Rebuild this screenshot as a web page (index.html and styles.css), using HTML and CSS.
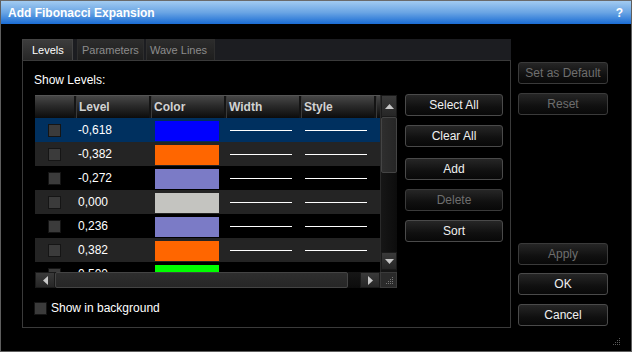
FILE: index.html
```html
<!DOCTYPE html>
<html lang="en">
<head>
    <meta charset="UTF-8">
    <title>Add Fibonacci Expansion</title>
    <link rel="stylesheet" href="styles.css">
</head>
<body>
    <div class="window">
        <div class="titlebar">
            <span class="title">Add Fibonacci Expansion</span>
            <span class="help">?</span>
        </div>

        <div class="main">
            <div class="tabbox">
                <div class="tabs">
                    <div class="tab active">Levels</div>
                    <div class="tab tab-params">Parameters</div>
                    <div class="tab tab-wave">Wave Lines</div>
                </div>
                <div class="panel">
                    <div class="label">Show Levels:</div>
                    <div class="grid-row">
                        <div class="grid">
                            <div class="table">
                                <div class="row head">
                                    <div class="cell c-check"></div>
                                    <div class="cell c-level">Level</div>
                                    <div class="cell c-color">Color</div>
                                    <div class="cell c-width">Width</div>
                                    <div class="cell c-style">Style</div>
                                    <div class="cell c-pad"></div>
                                </div>
                                <div class="row selected">
                                    <div class="cell c-check"><span class="check"></span></div>
                                    <div class="cell c-level">-0,618</div>
                                    <div class="cell c-color"><span class="swatch" style="background:#0000ff"></span></div>
                                    <div class="cell c-width"><span class="line"></span></div>
                                    <div class="cell c-style"><span class="line"></span></div>
                                    <div class="cell c-pad"></div>
                                </div>
                                <div class="row alt">
                                    <div class="cell c-check"><span class="check"></span></div>
                                    <div class="cell c-level">-0,382</div>
                                    <div class="cell c-color"><span class="swatch" style="background:#ff6600"></span></div>
                                    <div class="cell c-width"><span class="line"></span></div>
                                    <div class="cell c-style"><span class="line"></span></div>
                                    <div class="cell c-pad"></div>
                                </div>
                                <div class="row">
                                    <div class="cell c-check"><span class="check"></span></div>
                                    <div class="cell c-level">-0,272</div>
                                    <div class="cell c-color"><span class="swatch" style="background:#7b7bc6"></span></div>
                                    <div class="cell c-width"><span class="line"></span></div>
                                    <div class="cell c-style"><span class="line"></span></div>
                                    <div class="cell c-pad"></div>
                                </div>
                                <div class="row alt">
                                    <div class="cell c-check"><span class="check"></span></div>
                                    <div class="cell c-level">0,000</div>
                                    <div class="cell c-color"><span class="swatch" style="background:#c4c4c0"></span></div>
                                    <div class="cell c-width"><span class="line"></span></div>
                                    <div class="cell c-style"><span class="line"></span></div>
                                    <div class="cell c-pad"></div>
                                </div>
                                <div class="row">
                                    <div class="cell c-check"><span class="check"></span></div>
                                    <div class="cell c-level">0,236</div>
                                    <div class="cell c-color"><span class="swatch" style="background:#7b7bc6"></span></div>
                                    <div class="cell c-width"><span class="line"></span></div>
                                    <div class="cell c-style"><span class="line"></span></div>
                                    <div class="cell c-pad"></div>
                                </div>
                                <div class="row alt">
                                    <div class="cell c-check"><span class="check"></span></div>
                                    <div class="cell c-level">0,382</div>
                                    <div class="cell c-color"><span class="swatch" style="background:#ff6600"></span></div>
                                    <div class="cell c-width"><span class="line"></span></div>
                                    <div class="cell c-style"><span class="line"></span></div>
                                    <div class="cell c-pad"></div>
                                </div>
                                <div class="row">
                                    <div class="cell c-check"><span class="check"></span></div>
                                    <div class="cell c-level">0,500</div>
                                    <div class="cell c-color"><span class="swatch" style="background:#00ff00"></span></div>
                                    <div class="cell c-width"><span class="line"></span></div>
                                    <div class="cell c-style"><span class="line"></span></div>
                                    <div class="cell c-pad"></div>
                                </div>
                            </div>

                            <div class="vscroll">
                                <div class="sbtn up">
                                    <svg width="9" height="5" viewBox="0 0 9 5"><polygon points="4.5,0 9,5 0,5" fill="#c8c8c8"/></svg>
                                </div>
                                <div class="vthumb"></div>
                                <div class="vtrack"></div>
                                <div class="sbtn down">
                                    <svg width="9" height="5" viewBox="0 0 9 5"><polygon points="0,0 9,0 4.5,5" fill="#c8c8c8"/></svg>
                                </div>
                            </div>

                            <div class="hscroll">
                                <div class="sbtn left">
                                    <svg width="5" height="9" viewBox="0 0 5 9"><polygon points="5,0 5,9 0,4.5" fill="#c8c8c8"/></svg>
                                </div>
                                <div class="hthumb"></div>
                                <div class="htrack"></div>
                                <div class="sbtn right">
                                    <svg width="5" height="9" viewBox="0 0 5 9"><polygon points="0,0 5,4.5 0,9" fill="#c8c8c8"/></svg>
                                </div>
                            </div>

                            <div class="corner">
                                <svg width="9" height="9" viewBox="0 0 9 9" fill="#777">
                                    <rect x="7" y="1" width="1" height="1"/>
                                    <rect x="5" y="3" width="1" height="1"/><rect x="7" y="3" width="1" height="1"/>
                                    <rect x="3" y="5" width="1" height="1"/><rect x="5" y="5" width="1" height="1"/><rect x="7" y="5" width="1" height="1"/>
                                    <rect x="1" y="7" width="1" height="1"/><rect x="3" y="7" width="1" height="1"/><rect x="5" y="7" width="1" height="1"/><rect x="7" y="7" width="1" height="1"/>
                                </svg>
                            </div>
                        </div>

                        <div class="grid-buttons">
                            <button class="btn">Select All</button>
                            <button class="btn">Clear All</button>
                            <button class="btn btn-add">Add</button>
                            <button class="btn disabled">Delete</button>
                            <button class="btn">Sort</button>
                        </div>
                    </div>

                    <label class="bg-option">
                        <span class="check"></span>
                        <span>Show in background</span>
                    </label>
                </div>
            </div>

            <div class="side">
                <button class="btn disabled">Set as Default</button>
                <button class="btn disabled">Reset</button>
                <button class="btn disabled btn-apply">Apply</button>
                <button class="btn">OK</button>
                <button class="btn">Cancel</button>
            </div>
        </div>

        <svg class="grip" width="9" height="9" viewBox="0 0 9 9" fill="#5a5a5a">
            <rect x="7" y="1" width="1" height="1"/>
            <rect x="5" y="3" width="1" height="1"/><rect x="7" y="3" width="1" height="1"/>
            <rect x="3" y="5" width="1" height="1"/><rect x="5" y="5" width="1" height="1"/><rect x="7" y="5" width="1" height="1"/>
            <rect x="1" y="7" width="1" height="1"/><rect x="3" y="7" width="1" height="1"/><rect x="5" y="7" width="1" height="1"/><rect x="7" y="7" width="1" height="1"/>
        </svg>
    </div>
</body>
</html>
```

FILE: styles.css
```css
* {
    box-sizing: border-box;
}
body {
    margin: 0;
    background-color: #000;
    font-family: "Liberation Sans", Arial, sans-serif;
    font-size: 12px;
    color: #fff;
}
.window {
    position: relative;
    width: 632px;
    height: 352px;
    border: 1px solid #5e5e5e;
    border-top-color: #6a6a6a;
    background-color: #000;
    overflow: hidden;
}
.titlebar {
    height: 23px;
    display: flex;
    align-items: center;
    justify-content: space-between;
    padding: 0 8px 0 7px;
    background: linear-gradient(#a2cbf1, #6aa5e4 50%, #1a6cd4);
    font-weight: bold;
    font-size: 12px;
    color: #fff;
}
.help {
    font-size: 12px;
}
.main {
    display: flex;
    gap: 7px;
    padding: 15px 0 0 21px;
}
.tabbox {
    width: 489px;
    display: flex;
    flex-direction: column;
}
.tabs {
    height: 21px;
    display: flex;
    background-color: #1c1d21;
}
.tab {
    height: 21px;
    width: 67px;
    display: flex;
    align-items: center;
    padding-left: 4px;
    font-size: 11px;
    color: #8c8c8c;
    background: linear-gradient(#2c2c2c, #1e1e1e);
    border: 1px solid #2e2e2e;
    border-bottom: none;
}
.tab.active {
    width: 51px;
    padding-left: 9px;
    color: #fff;
    background: linear-gradient(#3c3c3c, #262626);
    border-color: #444;
}
.tab-params {
    margin-left: 4px;
}
.tab-wave {
    margin-left: 2px;
    width: 69px;
    padding-left: 3px;
}
.panel {
    height: 268px;
    border: 1px solid #3a3a3a;
    padding: 12px 0 0 11px;
}
.label {
    height: 14px;
    line-height: 14px;
}
.grid-row {
    display: flex;
    gap: 8px;
    margin-top: 7px;
    margin-left: 1px;
}
.grid {
    margin-top: 1px;
    display: grid;
    grid-template-columns: 345px 17px;
    grid-template-rows: 177px 16px;
    background-color: #000;
}
.table {
    overflow: hidden;
}
.row {
    display: flex;
    height: 24px;
    align-items: center;
    background-color: #000;
}
.row.alt {
    background-color: #242424;
}
.row.selected {
    background-color: #00305f;
}
.row.head {
    height: 23px;
    background: linear-gradient(#474747, #2a2a2a 45%, #0c0c0c);
    border-top: 1px solid #555;
    font-weight: bold;
    color: #d2d2d2;
}
.cell {
    height: 100%;
    display: flex;
    align-items: center;
    flex-shrink: 0;
}
.head .cell + .cell {
    border-left: 2px solid #141414;
    box-shadow: inset 1px 0 0 #3a3a3a;
}
.c-check {
    width: 39px;
    padding-left: 13px;
}
.c-level {
    width: 75px;
    padding-left: 4px;
}
.c-color {
    width: 75px;
    padding: 0 5px 0 6px;
}
.head .c-level,
.head .c-color,
.head .c-width,
.head .c-style {
    padding-left: 3px;
}
.c-width,
.c-style {
    width: 75px;
    padding: 0 6px;
}
.c-pad {
    width: 6px;
}
.check {
    width: 13px;
    height: 13px;
    display: inline-block;
    background-color: #3b3b3b;
    border: 1px solid #151515;
    flex-shrink: 0;
}
.swatch {
    display: block;
    width: 64px;
    height: 20px;
    margin-top: 2px;
}
.line {
    display: block;
    width: 62px;
    height: 1px;
    background-color: #fff;
}
.vscroll {
    display: flex;
    flex-direction: column;
    background-color: #141414;
    border-left: 1px solid #2a2a2a;
}
.sbtn {
    display: flex;
    align-items: center;
    justify-content: center;
    background: linear-gradient(#3a3a3a, #262626);
    border: 1px solid #1a1a1a;
}
.sbtn.up {
    height: 22px;
}
.sbtn.down {
    height: 18px;
    margin-bottom: 2px;
}
.vthumb {
    height: 56px;
    background: linear-gradient(90deg, #2e2e2e, #262626);
    border: 1px solid #444;
    border-radius: 2px;
}
.vtrack {
    flex: 1;
    background: linear-gradient(90deg, #161616, #0c0c0c);
}
.hscroll {
    display: flex;
    background-color: #141414;
}
.sbtn.left,
.sbtn.right {
    width: 20px;
}
.hthumb {
    width: 293px;
    background: linear-gradient(#2e2e2e, #262626);
    border: 1px solid #444;
    border-radius: 2px;
}
.htrack {
    flex: 1;
    background: linear-gradient(#161616, #0c0c0c);
}
.corner {
    display: flex;
    align-items: flex-end;
    justify-content: flex-end;
    padding: 0 2px 2px 0;
    background-color: #2a2a2a;
    border: 1px solid #3a3a3a;
}
.grid-buttons {
    width: 98px;
    display: flex;
    flex-direction: column;
    gap: 9px;
}
.btn {
    height: 22px;
    width: 100%;
    padding: 0;
    font-family: "Liberation Sans", Arial, sans-serif;
    font-size: 12px;
    color: #f0f0f0;
    background: linear-gradient(#262626, #101010 60%, #080808);
    border: 1px solid #4a4a4a;
    border-radius: 3px;
}
.btn.disabled {
    color: #6e6e6e;
    border-color: #3a3a3a;
}
.btn-add {
    margin-top: 2px;
}
.bg-option {
    display: flex;
    align-items: center;
    gap: 4px;
    margin-top: 13px;
    height: 14px;
}
.side {
    width: 90px;
    height: 289px;
    display: flex;
    flex-direction: column;
    gap: 9px;
    padding: 23px 0 2px;
}
.btn-apply {
    margin-top: auto;
    margin-bottom: -1px;
}
.grip {
    position: absolute;
    right: 10px;
    bottom: 5px;
}
```
